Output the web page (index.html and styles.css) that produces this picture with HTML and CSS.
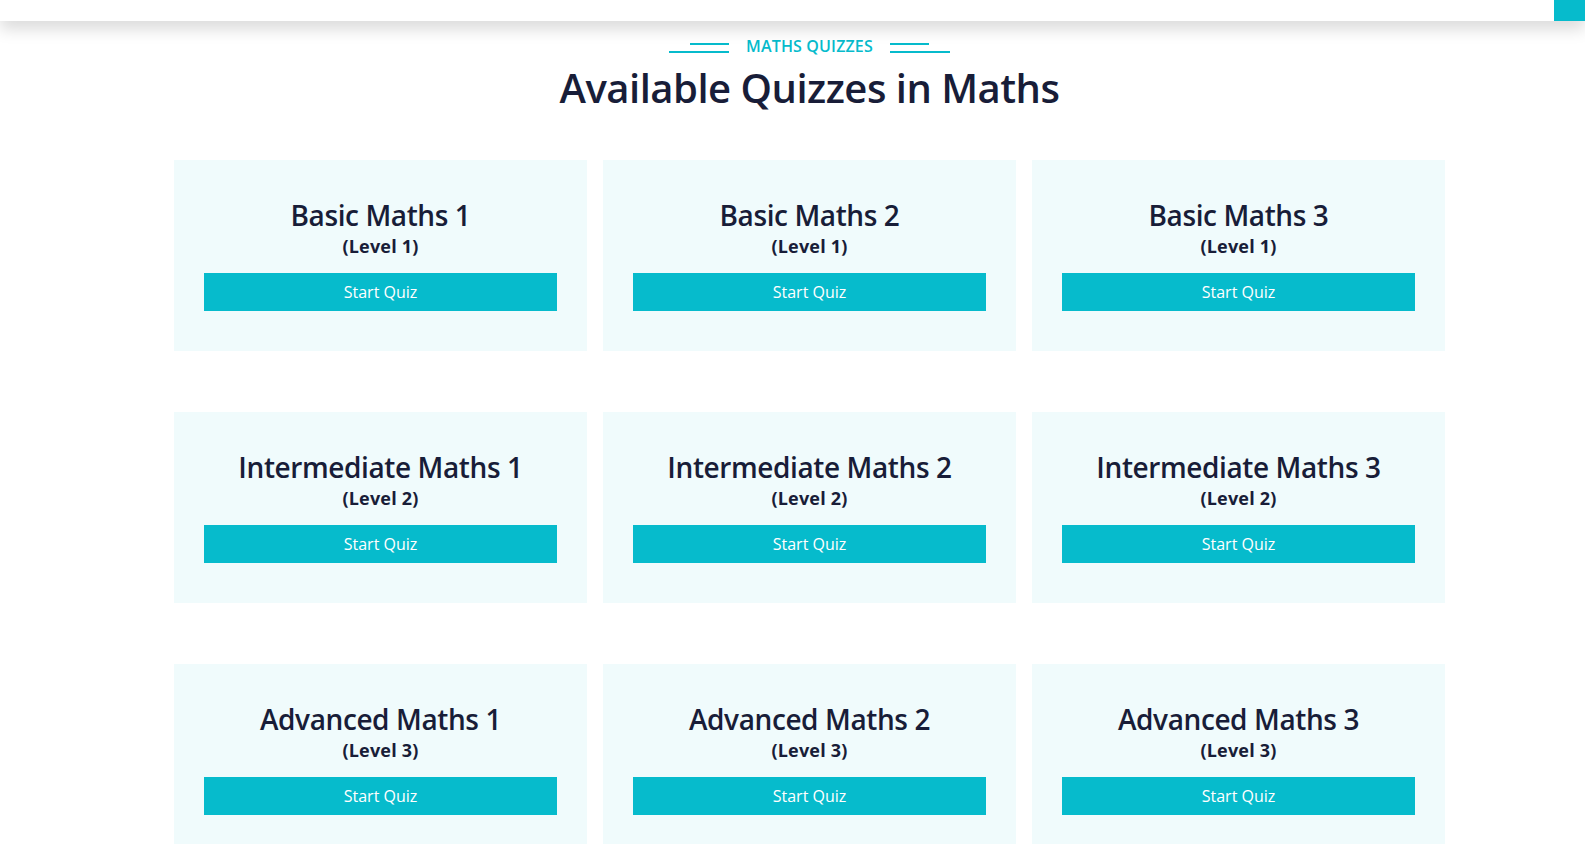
FILE: index.html
```html
<!DOCTYPE html>
<html lang="en">
<head>
<meta charset="utf-8">
<title>Available Quizzes in Maths</title>
<link rel="stylesheet" href="styles.css">
</head>
<body>
<header class="topbar">
  <span class="topbar-btn"></span>
</header>
<main class="section">
  <div class="section-head">
    <div class="eyebrow">
      <span class="lines lines-left"><i class="line short"></i><i class="line long"></i></span>
      <span class="eyebrow-text">MATHS QUIZZES</span>
      <span class="lines lines-right"><i class="line short"></i><i class="line long"></i></span>
    </div>
    <h1 class="title">Available Quizzes in Maths</h1>
  </div>
  <div class="grid">
    <div class="card"><h3 class="card-title">Basic Maths 1</h3><h6 class="card-level">(Level 1)</h6><a class="btn" href="#">Start Quiz</a></div>
    <div class="card"><h3 class="card-title">Basic Maths 2</h3><h6 class="card-level">(Level 1)</h6><a class="btn" href="#">Start Quiz</a></div>
    <div class="card"><h3 class="card-title">Basic Maths 3</h3><h6 class="card-level">(Level 1)</h6><a class="btn" href="#">Start Quiz</a></div>
    <div class="card"><h3 class="card-title">Intermediate Maths 1</h3><h6 class="card-level">(Level 2)</h6><a class="btn" href="#">Start Quiz</a></div>
    <div class="card"><h3 class="card-title">Intermediate Maths 2</h3><h6 class="card-level">(Level 2)</h6><a class="btn" href="#">Start Quiz</a></div>
    <div class="card"><h3 class="card-title">Intermediate Maths 3</h3><h6 class="card-level">(Level 2)</h6><a class="btn" href="#">Start Quiz</a></div>
    <div class="card"><h3 class="card-title">Advanced Maths 1</h3><h6 class="card-level">(Level 3)</h6><a class="btn" href="#">Start Quiz</a></div>
    <div class="card"><h3 class="card-title">Advanced Maths 2</h3><h6 class="card-level">(Level 3)</h6><a class="btn" href="#">Start Quiz</a></div>
    <div class="card"><h3 class="card-title">Advanced Maths 3</h3><h6 class="card-level">(Level 3)</h6><a class="btn" href="#">Start Quiz</a></div>
  </div>
</main>
</body>
</html>
```
FILE: styles.css
```css
* { box-sizing: border-box; }
html, body { margin: 0; padding: 0; }
body {
  background: #ffffff;
  font-family: "Open Sans", "Noto Sans", sans-serif;
  color: #181d38;
  overflow: hidden;
}
.topbar {
  position: relative;
  z-index: 2;
  height: 21px;
  background: #ffffff;
  box-shadow: 0 8px 16px rgba(0, 0, 0, 0.15);
  display: flex;
  justify-content: flex-end;
}
.topbar-btn {
  width: 31px;
  height: 21px;
  background: #06bbcc;
}
.section {
  padding-top: 13px;
  padding-left: 174px;
}
.section-head {
  width: 1271px;
  display: flex;
  flex-direction: column;
  align-items: center;
}
.eyebrow {
  display: flex;
  align-items: center;
  gap: 17px;
  height: 24px;
}
.eyebrow-text {
  font-size: 16px;
  font-weight: 600;
  line-height: 24px;
  letter-spacing: 0.15px;
  color: #06bbcc;
}
.lines {
  display: flex;
  flex-direction: column;
  gap: 6px;
  width: 60px;
  margin-top: 3px;
}
.lines-left { align-items: flex-end; }
.lines-right { align-items: flex-start; }
.line {
  display: block;
  height: 2px;
  background: #06bbcc;
}
.line.short { width: 39px; }
.line.long { width: 60px; }
.title {
  margin: 6px 0 0;
  font-size: 40px;
  font-weight: 600;
  line-height: 48px;
  letter-spacing: -0.5px;
  color: #181d38;
}
.grid {
  width: 1271px;
  margin-top: 48px;
  display: grid;
  grid-template-columns: repeat(3, 1fr);
  column-gap: 16px;
  row-gap: 61px;
}
.card {
  background: #f0fbfc;
  padding: 38px 30px 40px;
  display: flex;
  flex-direction: column;
  align-items: center;
  text-align: center;
}
.card-title {
  margin: 0 0 2px;
  font-size: 28px;
  font-weight: 600;
  line-height: 34px;
  letter-spacing: -0.4px;
  color: #181d38;
}
.card-level {
  margin: 0 0 15px;
  font-size: 18px;
  font-weight: 700;
  line-height: 24px;
  letter-spacing: 0.2px;
  color: #181d38;
}
.btn {
  display: flex;
  align-items: center;
  justify-content: center;
  width: 100%;
  height: 38px;
  background: #06bbcc;
  color: #ffffff;
  font-size: 16px;
  font-weight: 500;
  text-decoration: none;
}
```
